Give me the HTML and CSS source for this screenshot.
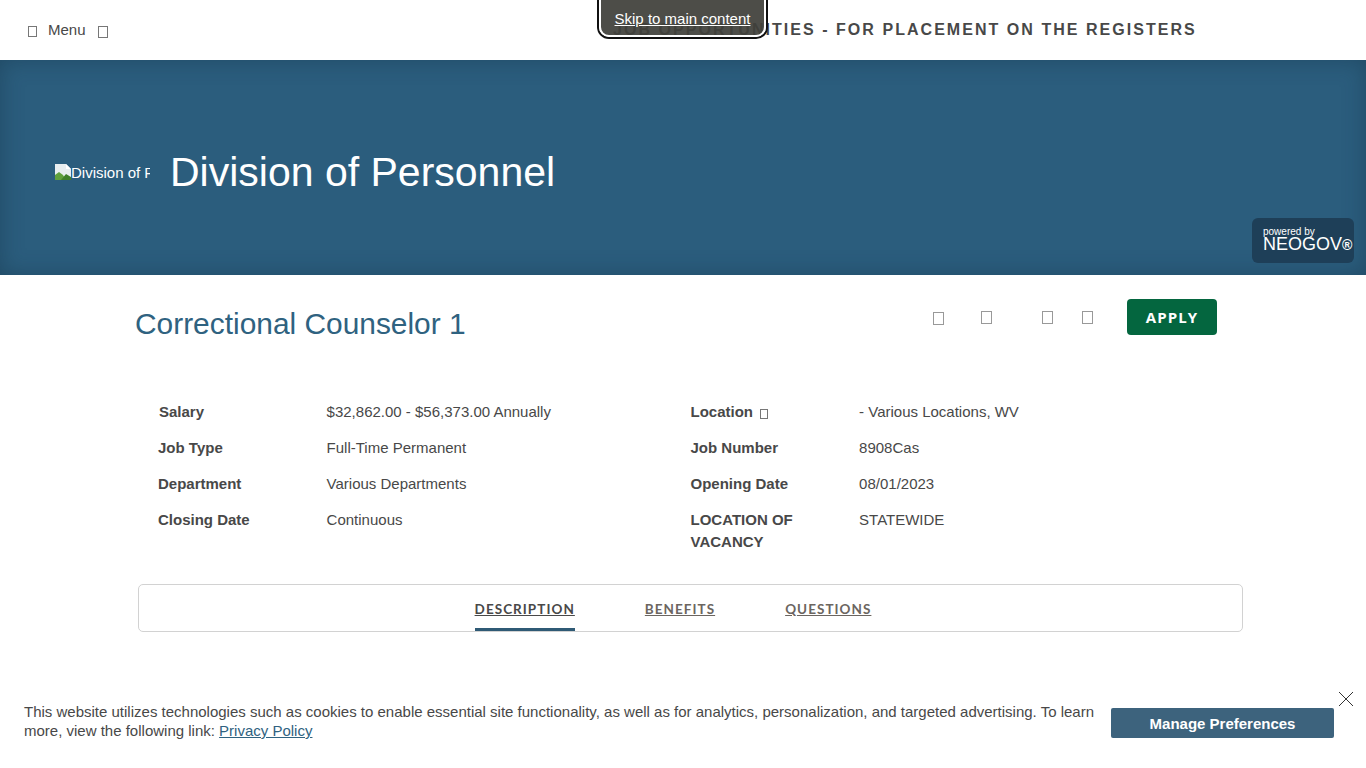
FILE: index.html
```html
<!DOCTYPE html>
<html lang="en">
<head>
  <meta charset="UTF-8">
  <meta name="viewport" content="width=device-width, initial-scale=1.0">
  <title>Correctional Counselor 1</title>
  <link rel="stylesheet" href="styles.css">
</head>
<body>
  <a class="skip" href="#main">Skip to main content</a>

  <header class="topbar">
    <div class="menu">
      <span class="tofu"></span>
      <span class="menu-label">Menu</span>
      <span class="tofu menu-caret"></span>
    </div>
    <div class="topbar-title">JOB OPPORTUNITIES - FOR PLACEMENT ON THE REGISTERS</div>
  </header>

  <section class="banner">
    <div class="logo">
      <svg class="broken" width="16" height="16" viewBox="0 0 16 16">
        <path d="M0 0h11l5 5v11H0z" fill="#e8eef0"/>
        <path d="M11 0l5 5h-5z" fill="#fff"/>
        <path d="M0 16V11l4-3 4 3 3 5z" fill="#5fa03c"/>
        <path d="M6 16l5-6 5 3v3z" fill="#3f7f2a"/>
      </svg><span>Division of Personnel</span>
    </div>
    <h1 class="agency">Division of Personnel</h1>
    <div class="powered">
      <span class="powered-by">powered by</span>
      <span class="neogov">NEOGOV<small>®</small></span>
    </div>
  </section>

  <main id="main" class="job">
    <div class="job-head">
      <h2 class="job-title">Correctional Counselor 1</h2>
      <div class="job-actions">
        <span class="tofu act1"></span>
        <span class="tofu act2"></span>
        <span class="tofu act3"></span>
        <span class="tofu act4"></span>
        <button class="apply">APPLY</button>
      </div>
    </div>

    <div class="details">
      <div class="col col-left">
        <div class="row"><div class="key key-first">Salary</div><div class="val">$32,862.00 - $56,373.00 Annually</div></div>
        <div class="row"><div class="key">Job Type</div><div class="val">Full-Time Permanent</div></div>
        <div class="row"><div class="key">Department</div><div class="val">Various Departments</div></div>
        <div class="row"><div class="key">Closing Date</div><div class="val">Continuous</div></div>
      </div>
      <div class="col col-right">
        <div class="row"><div class="key">Location <span class="tofu tofu-small"></span></div><div class="val">- Various Locations, WV</div></div>
        <div class="row"><div class="key">Job Number</div><div class="val">8908Cas</div></div>
        <div class="row"><div class="key">Opening Date</div><div class="val">08/01/2023</div></div>
        <div class="row"><div class="key">LOCATION OF VACANCY</div><div class="val">STATEWIDE</div></div>
      </div>
    </div>

    <nav class="tabs">
      <a class="tab active" href="#">DESCRIPTION</a>
      <a class="tab" href="#">BENEFITS</a>
      <a class="tab" href="#">QUESTIONS</a>
    </nav>
  </main>

  <div class="cookies">
    <p>This website utilizes technologies such as cookies to enable essential site functionality, as well as for analytics, personalization, and targeted advertising. To learn more, view the following link: <a href="#">Privacy Policy</a></p>
    <button class="prefs">Manage Preferences</button>
    <svg class="close" width="16" height="16" viewBox="0 0 16 16">
      <path d="M1 1l14 14M15 1L1 15" stroke="#333" stroke-width="1" fill="none"/>
    </svg>
  </div>
</body>
</html>
```

FILE: styles.css
```css
* {
  box-sizing: border-box;
}

html, body {
  height: 768px;
  overflow: hidden;
}

body {
  margin: 0;
  font-family: "Liberation Sans", Arial, sans-serif;
  font-size: 15px;
  color: #484848;
  background: #fff;
}

.tofu {
  display: inline-block;
  width: 9px;
  height: 11px;
  border: 1px solid #777;
}

.skip {
  position: absolute;
  top: -12px;
  left: 599px;
  width: 167px;
  height: 49px;
  padding-top: 20px;
  text-align: center;
  font-size: 15px;
  line-height: 18px;
  color: #fff;
  background: rgba(64, 63, 58, 0.93);
  border: 2px solid #fff;
  border-radius: 10px;
  box-shadow: 0 0 0 2px #111;
  z-index: 5;
}

.topbar {
  display: flex;
  height: 60px;
}

.menu {
  display: flex;
  align-items: center;
  width: 613px;
  padding: 2px 0 0 28px;
}

.menu-label {
  margin: -3px 0 0 11px;
}

.menu-caret {
  margin: 2px 0 0 12px;
  width: 10px;
  height: 12px;
}

.topbar-title {
  padding-top: 21px;
  font-size: 16px;
  line-height: 18px;
  font-weight: bold;
  letter-spacing: 2.04px;
  white-space: nowrap;
}

.banner {
  display: flex;
  align-items: center;
  position: relative;
  height: 215px;
  padding: 9px 0 0 55px;
  background: #2b5d7d;
  box-shadow: inset 0 0 22px rgba(20, 50, 70, 0.45);
}

.logo {
  display: flex;
  align-items: center;
  width: 95px;
  height: 20px;
  overflow: hidden;
  color: #fff;
  white-space: nowrap;
}

.broken {
  flex: none;
}

.agency {
  margin: 0 0 0 20px;
  font-size: 41px;
  font-weight: normal;
  color: #fff;
}

.powered {
  position: absolute;
  top: 158px;
  right: 12px;
  width: 102px;
  height: 45px;
  padding: 9px 0 0 11px;
  color: #fff;
  background: #1e3f58;
  border-radius: 6px;
}

.powered-by {
  display: block;
  font-size: 10px;
  line-height: 10px;
}

.neogov {
  display: block;
  font-size: 18px;
  line-height: 15px;
}

.neogov small {
  font-size: 14px;
  font-weight: bold;
}

.job {
  padding: 24px 123px 0 135px;
}

.job-head {
  display: flex;
  justify-content: space-between;
  height: 36px;
}

.job-title {
  margin: 5px 0 0;
  font-size: 29.9px;
  line-height: 40px;
  font-weight: normal;
  color: #2f6280;
}

.job-actions {
  display: flex;
  align-items: center;
  padding-right: 26px;
}

.job-actions .tofu {
  width: 11px;
  height: 13px;
  border-color: #999;
}

.act1 {
  margin-top: 3px;
}

.act2 {
  margin: 0 0 0 37px;
}

.act3 {
  margin: 0 0 0 50px;
}

.act4 {
  margin: 0 0 0 29px;
}

.apply {
  margin-left: 34px;
  width: 90px;
  height: 36px;
  padding: 0;
  border: 0;
  border-radius: 4px;
  background: #04663f;
  color: #fff;
  font-family: "Open Sans", sans-serif;
  font-size: 15px;
  font-weight: bold;
  letter-spacing: 1.1px;
}

.details {
  display: flex;
  margin-top: 66px;
  line-height: 22px;
}

.col-left {
  width: 555.5px;
  padding-left: 23px;
}

.col-right {
  flex: 1;
}

.row {
  display: flex;
  margin-bottom: 14px;
}

.key {
  flex: none;
  width: 168.6px;
  font-weight: bold;
}

.key-first {
  padding-left: 1px;
}

.col-right .key {
  padding-right: 30px;
}

.tofu-small {
  width: 8px;
  height: 10px;
  margin-left: 3px;
  vertical-align: -2px;
}

.tabs {
  display: flex;
  justify-content: center;
  gap: 70px;
  width: 1105px;
  height: 48px;
  margin: 17px 0 0 3px;
  padding-right: 35px;
  border: 1px solid #d2d2d2;
  border-radius: 5px;
}

.tab {
  height: 46px;
  padding-top: 16px;
  font-family: Lato, "Liberation Sans", sans-serif;
  font-size: 13.5px;
  line-height: 16px;
  font-weight: bold;
  letter-spacing: 1.04px;
  color: #6b6560;
}

.tab.active {
  color: #484848;
  border-bottom: 3px solid #2f5a75;
}

.cookies {
  position: fixed;
  left: 0;
  right: 0;
  bottom: 0;
  display: flex;
  align-items: center;
  height: 88px;
  padding: 0 32px 2px 24px;
  background: #fff;
  line-height: 19px;
}

.cookies p {
  flex: 1;
  margin: 0 16px 4px 0;
}

.cookies a {
  color: #2f6280;
}

.prefs {
  flex: none;
  width: 223px;
  height: 30px;
  padding: 0;
  border: 0;
  border-radius: 2px;
  background: #3d637d;
  color: #fff;
  font-family: "Liberation Sans", Arial, sans-serif;
  font-size: 15px;
  font-weight: bold;
}

.close {
  position: absolute;
  top: 11px;
  right: 12px;
}
```
